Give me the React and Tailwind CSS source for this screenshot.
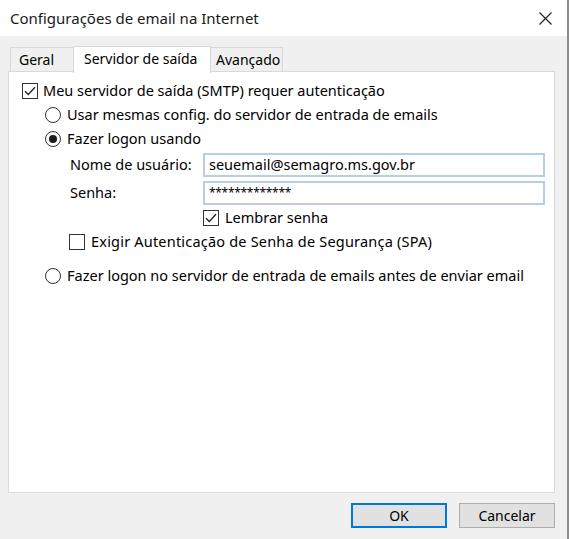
import React from "react";

const font = { fontFamily: '"Noto Sans", "Open Sans", sans-serif' };

function Checkbox({ checked }) {
  return (
    <span className="w-[16px] h-[16px] border border-[#333333] bg-white flex items-center justify-center shrink-0">
      {checked && (
        <svg width="14" height="14" viewBox="0 0 14 14">
          <path d="M2 7.2 L5.3 10.5 L12 3.3" fill="none" stroke="#222" strokeWidth="1.3" />
        </svg>
      )}
    </span>
  );
}

function Radio({ checked }) {
  return (
    <span className="w-[16px] h-[16px] rounded-full border border-[#333333] bg-white flex items-center justify-center shrink-0">
      {checked && <span className="w-[8px] h-[8px] rounded-full bg-[#1a1a1a]" />}
    </span>
  );
}

export default function App() {
  return (
    <div className="w-[569px] h-[539px] flex text-black text-[14px]" style={font}>
      <div className="flex-1 flex flex-col bg-[#f0f0f0]">
        {/* Title bar */}
        <div className="h-[36px] bg-white flex items-center justify-between pl-[10px] pr-[15px]">
          <span className="text-[15px] text-[#1a1a1a]">Configurações de email na Internet</span>
          <svg width="13" height="13" viewBox="0 0 13 13">
            <path d="M0.5 0.5 L12.5 12.5 M12.5 0.5 L0.5 12.5" stroke="#222" strokeWidth="1.2" />
          </svg>
        </div>

        {/* Body */}
        <div className="flex-1 flex flex-col pl-[8px] pr-[12px]">
          {/* Tabs */}
          <div className="mt-[10px] h-[26px] flex items-end pl-[2px] relative z-10">
            <div className="h-[24px] w-[64px] border border-b-0 border-[#d9d9d9] bg-[#f0f0f0] flex items-center pl-[8px] mb-[1px]">
              Geral
            </div>
            <div className="h-[27px] w-[138px] -ml-[1px] border border-b-0 border-[#d9d9d9] bg-white flex items-center pl-[10px] pb-[3px] -mb-[1px]">
              Servidor de saída
            </div>
            <div className="h-[24px] w-[73px] -ml-[1px] border border-b-0 border-[#d9d9d9] bg-[#f0f0f0] flex items-center pl-[5px] mb-[1px]">
              Avançado
            </div>
          </div>

          {/* Panel */}
          <div className="h-[422px] -mt-[1px] border border-[#d9d9d9] bg-white flex flex-col text-[14.5px]">
            <div className="mt-[9px] h-[20px] flex items-center pl-[13px] gap-[5px]">
              <Checkbox checked />
              <span>Meu servidor de saída (SMTP) requer autenticação</span>
            </div>
            <div className="mt-[4px] h-[20px] flex items-center pl-[36px] gap-[6px]">
              <Radio />
              <span>Usar mesmas config. do servidor de entrada de emails</span>
            </div>
            <div className="mt-[4px] h-[20px] flex items-center pl-[36px] gap-[6px]">
              <Radio checked />
              <span>Fazer logon usando</span>
            </div>
            <div className="mt-[4px] h-[24px] flex items-center pl-[61px]">
              <span className="w-[133px]">Nome de usuário:</span>
              <div className="w-[342px] h-[24px] border-2 border-[#b9cde6] bg-white flex items-center pl-[4px]">
                seuemail@semagro.ms.gov.br
              </div>
            </div>
            <div className="mt-[4px] h-[24px] flex items-center pl-[61px]">
              <span className="w-[133px]">Senha:</span>
              <div className="w-[342px] h-[24px] border-2 border-[#b9cde6] bg-white flex items-center pl-[4px] text-[12px] tracking-[-0.3px]">
                *************
              </div>
            </div>
            <div className="mt-[3px] h-[20px] flex items-center pl-[194px] gap-[6px]">
              <Checkbox checked />
              <span>Lembrar senha</span>
            </div>
            <div className="mt-[4px] h-[20px] flex items-center pl-[60px] gap-[6px]">
              <Checkbox />
              <span className="tracking-[0.2px]">Exigir Autenticação de Senha de Segurança (SPA)</span>
            </div>
            <div className="mt-[14px] h-[20px] flex items-center pl-[36px] gap-[6px]">
              <Radio />
              <span>Fazer logon no servidor de entrada de emails antes de enviar email</span>
            </div>
          </div>

          {/* Buttons */}
          <div className="mt-[10px] flex justify-end gap-[12px]">
            <button className="w-[96px] h-[25px] border-2 border-[#0078d7] bg-[#e1e1e1] flex items-center justify-center">
              OK
            </button>
            <button className="w-[96px] h-[25px] border border-[#adadad] bg-[#e1e1e1] flex items-center justify-center">
              Cancelar
            </button>
          </div>
        </div>
      </div>
      <div className="w-[2px] bg-[#8c8c8c]" />
    </div>
  );
}
